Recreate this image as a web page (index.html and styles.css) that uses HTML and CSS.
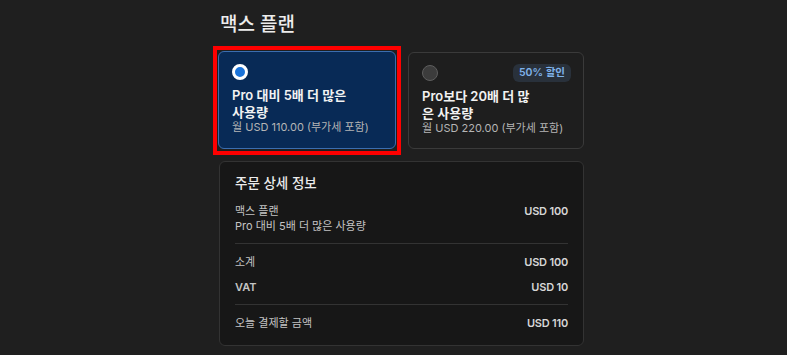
FILE: index.html
```html
<!DOCTYPE html>
<html lang="ko">
<head>
  <meta charset="UTF-8" />
  <meta name="viewport" content="width=device-width, initial-scale=1.0"/>
  <title>맥스 플랜</title>
  <link rel="stylesheet" href="styles.css">
</head>
<body>
  <div class="checkout">
    <h1 class="title">맥스 플랜</h1>

    <div class="plans">
      <div class="plan selected">
        <div class="plan-top">
          <span class="radio"></span>
        </div>
        <div class="plan-name">Pro 대비 5배 더 많은<br>사용량</div>
        <div class="plan-price">월 USD 110.00 (부가세 포함)</div>
      </div>
      <div class="plan">
        <div class="plan-top">
          <span class="radio"></span>
          <span class="badge">50% 할인</span>
        </div>
        <div class="plan-name">Pro보다 20배 더 많<br>은 사용량</div>
        <div class="plan-price">월 USD 220.00 (부가세 포함)</div>
      </div>
    </div>

    <div class="summary">
      <h2 class="summary-title">주문 상세 정보</h2>
      <div class="row">
        <div>
          <div class="label">맥스 플랜</div>
          <div class="label">Pro 대비 5배 더 많은 사용량</div>
        </div>
        <div class="amount">USD 100</div>
      </div>
      <div class="divider"></div>
      <div class="row">
        <div class="label">소계</div>
        <div class="amount">USD 100</div>
      </div>
      <div class="row">
        <div class="label strong">VAT</div>
        <div class="amount">USD 10</div>
      </div>
      <div class="divider"></div>
      <div class="row">
        <div class="label">오늘 결제할 금액</div>
        <div class="amount">USD 110</div>
      </div>
    </div>
  </div>
</body>
</html>
```

FILE: styles.css
```css
body {
  background-color: #1f1f1f;
  font-family: Inter, "Noto Sans CJK KR", sans-serif;
  color: #e6e6e6;
  margin: 0;
}

.checkout {
  width: 366px;
  margin-left: 218px;
  padding-top: 12px;
}

.title {
  font-size: 19px;
  font-weight: 500;
  margin: 0 0 13px 2px;
  line-height: 26px;
  color: #ececec;
}

.plans {
  display: grid;
  grid-template-columns: 178px 176px;
  gap: 12px;
}

.plan {
  position: relative;
  box-sizing: border-box;
  height: 97px;
  border: 1px solid #3a3a3a;
  border-radius: 6px;
  padding: 11px 13px 0;
  background: #1e1e1e;
  margin-top: 1px;
}

.plan.selected {
  margin-top: 0;
  height: 98px;
  background: #082a56;
  border-color: #3a6db0;
}

/* highlight frame drawn over the selected plan */
.plan.selected::after {
  content: "";
  position: absolute;
  top: -6px;
  left: -6px;
  right: -6px;
  bottom: -7px;
  border: 4px solid #ff0000;
  pointer-events: none;
}

.plan-top {
  display: flex;
  justify-content: space-between;
  align-items: center;
  height: 18px;
  margin-bottom: 6px;
}

.radio {
  box-sizing: border-box;
  width: 16px;
  height: 16px;
  border-radius: 50%;
  background: #3c3c3c;
  border: 1px solid #5e5e5e;
}

.selected .radio {
  background: #1a73d9;
  border: 3px solid #ffffff;
}

.badge {
  font-size: 10.5px;
  font-weight: 600;
  color: #7fb2ea;
  background: #29313b;
  border-radius: 6px;
  padding: 1px 6px;
  line-height: 16px;
  margin-right: -1px;
}

.plan-name {
  font-size: 13px;
  font-weight: 600;
  line-height: 17px;
  color: #f2f2f2;
  margin-top: 2px;
}

.plan-price {
  font-size: 11px;
  line-height: 16px;
  color: #b5b5b5;
  margin-top: -2px;
}

.summary {
  box-sizing: border-box;
  margin-top: 12px;
  margin-left: 1px;
  width: 365px;
  height: 185px;
  background: #171717;
  border: 1px solid #333333;
  border-radius: 6px;
  padding: 11px 15px 0;
}

.summary-title {
  font-size: 13.5px;
  font-weight: 500;
  margin: 0 0 6px;
  line-height: 20px;
  color: #ececec;
}

.row {
  display: flex;
  justify-content: space-between;
  align-items: flex-start;
  padding: 5px 0;
}

.label {
  font-size: 11px;
  line-height: 15px;
  color: #c4c4c4;
}

.label.strong {
  font-weight: 600;
}

.amount {
  font-size: 11px;
  font-weight: 600;
  line-height: 15px;
  color: #d6d6d6;
  letter-spacing: -0.2px;
}

.divider {
  height: 1px;
  background: #333333;
  margin: 4px 0 6px;
}
```
